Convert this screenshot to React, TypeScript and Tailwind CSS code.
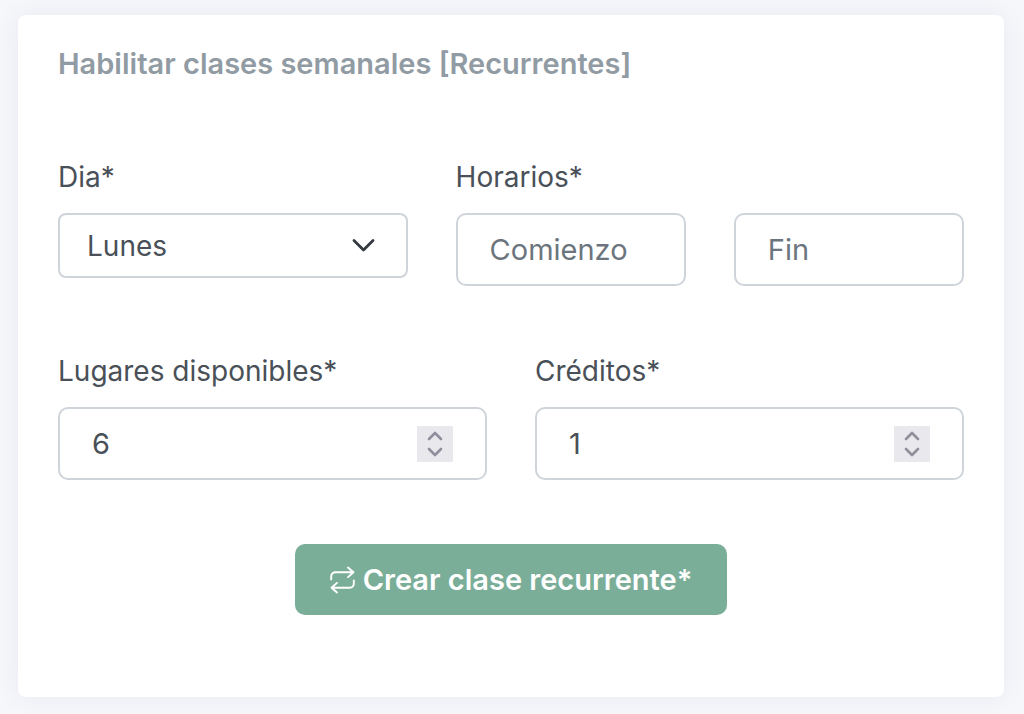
const labelStyles = "mb-4 block text-[28px] leading-10";
const inputStyles =
  "h-[73px] w-full appearance-none rounded-[10px] border-2 border-[#ced4da] bg-white px-8 text-[29px] placeholder:text-[#6c757d] focus:outline-none";

const RepeatIcon = () => (
  <svg
    viewBox="0 0 25 28"
    className="h-7 w-[25px]"
    fill="none"
    stroke="currentColor"
    strokeWidth="1.9"
    strokeLinecap="round"
    strokeLinejoin="round"
    aria-hidden="true"
  >
    <path d="M1.2 13.5v-3.2a4 4 0 0 1 4-4h18.3M18 1.5l5.5 4.8-5.5 4.8" />
    <path d="M23.8 14.5v3.2a4 4 0 0 1-4 4H1.5M7 16.9l-5.5 4.8L7 26.5" />
  </svg>
);

const NumberField = ({ id, label, value }: { id: string; label: string; value: number }) => (
  <div>
    <label htmlFor={id} className={labelStyles}>
      {label}
    </label>
    <div className="relative">
      <input
        id={id}
        type="number"
        defaultValue={value}
        className={`${inputStyles} [&::-webkit-inner-spin-button]:appearance-none`}
      />
      {/* Stepper arrows */}
      <svg
        viewBox="0 0 36 36"
        className="pointer-events-none absolute top-[19px] right-[34px] size-9 bg-[#e9e8ed]"
        fill="none"
        stroke="#908f9c"
        strokeWidth="2.6"
        strokeLinecap="round"
        strokeLinejoin="round"
        aria-hidden="true"
      >
        <path d="M12 13l6-6 6 6M12 23l6 6 6-6" />
      </svg>
    </div>
  </div>
);

export default function App() {
  return (
    <main className="min-h-screen bg-[#f5f7fb] pt-[15px] pr-5 pb-[17px] pl-[18px] font-[Inter,sans-serif] text-[#495057]">
      <form className="rounded-lg bg-white px-10 pt-7 pb-[82px] shadow-[0_0_28px_rgba(18,38,63,0.06)]">
        <h1 className="text-[29px] leading-[42px] font-semibold text-[#919ba3]">
          Habilitar clases semanales [Recurrentes]
        </h1>

        <div className="mt-18 grid grid-cols-[350fr_509fr] gap-12">
          <div>
            <label htmlFor="day" className={labelStyles}>
              Dia*
            </label>
            <div className="relative">
              <select
                id="day"
                className="h-[65px] w-full appearance-none rounded-lg border-2 border-[#ced4da] bg-white px-[27px] text-[28px]"
              >
                <option>Lunes</option>
              </select>
              <svg
                viewBox="0 0 32 32"
                className="pointer-events-none absolute top-4 right-7 size-8"
                fill="none"
                stroke="#343a40"
                strokeWidth="2.8"
                strokeLinecap="round"
                strokeLinejoin="round"
                aria-hidden="true"
              >
                <path d="M6 11.5l9.5 9.5L25 11.5" />
              </svg>
            </div>
          </div>
          <fieldset>
            <legend className={labelStyles}>Horarios*</legend>
            <div className="grid grid-cols-2 gap-12">
              <input aria-label="Comienzo" placeholder="Comienzo" className={inputStyles} />
              <input aria-label="Fin" placeholder="Fin" className={inputStyles} />
            </div>
          </fieldset>
        </div>

        <div className="mt-[65px] grid grid-cols-2 gap-12">
          <NumberField id="places" label="Lugares disponibles*" value={6} />
          <NumberField id="credits" label="Créditos*" value={1} />
        </div>

        <div className="mt-16 flex justify-center">
          <button
            type="button"
            className="flex h-[71px] items-center gap-2 rounded-[10px] bg-[#7bae99] px-[35px] text-[29px] font-semibold text-white"
          >
            <RepeatIcon />
            Crear clase recurrente*
          </button>
        </div>
      </form>
    </main>
  );
}
